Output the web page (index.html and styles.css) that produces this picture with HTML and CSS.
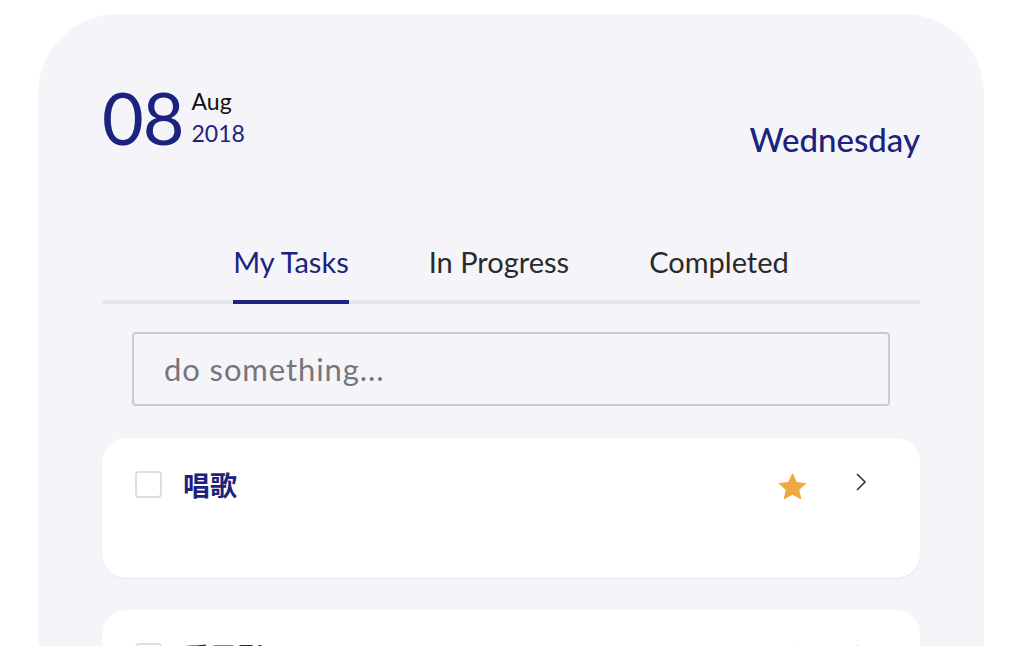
FILE: index.html
```html
<!DOCTYPE html>
<html lang="zh">
<head>
<meta charset="utf-8">
<title>Tasks</title>
<link rel="stylesheet" href="styles.css">
</head>
<body>
<div class="panel">
  <header class="header">
    <div class="date">
      <span class="day">08</span>
      <div class="month-year">
        <span class="month">Aug</span>
        <span class="year">2018</span>
      </div>
    </div>
    <div class="weekday">Wednesday</div>
  </header>

  <nav class="tabs">
    <div class="tab active">My Tasks</div>
    <div class="tab">In Progress</div>
    <div class="tab">Completed</div>
  </nav>

  <div class="input-wrap">
    <input class="task-input" type="text" placeholder="do something...">
  </div>

  <div class="card">
    <span class="checkbox"></span>
    <span class="task-name">唱歌</span>
    <svg class="star" width="31" height="30" viewBox="0 0 24 24"><path d="M12 1.8l3.1 6.6 7.2.8-5.4 4.9 1.5 7.1L12 17.6l-6.4 3.6 1.5-7.1L1.7 9.2l7.2-.8z" fill="#f0a843" stroke="#f0a843" stroke-width="1" stroke-linejoin="round"/></svg>
    <svg class="chevron" width="14" height="20" viewBox="0 0 14 20"><path d="M3 2l8 8-8 8" fill="none" stroke="#333" stroke-width="1.6"/></svg>
  </div>

  <div class="card">
    <span class="checkbox"></span>
    <span class="task-name">看電影</span>
    <svg class="star" width="31" height="30" viewBox="0 0 24 24"><path d="M12 1.8l3.1 6.6 7.2.8-5.4 4.9 1.5 7.1L12 17.6l-6.4 3.6 1.5-7.1L1.7 9.2l7.2-.8z" fill="#f0a843" stroke="#f0a843" stroke-width="1" stroke-linejoin="round"/></svg>
    <svg class="chevron" width="14" height="20" viewBox="0 0 14 20"><path d="M3 2l8 8-8 8" fill="none" stroke="#333" stroke-width="1.6"/></svg>
  </div>
</div>
</body>
</html>
```

FILE: styles.css
```css
* { box-sizing: border-box; }
html, body { margin: 0; padding: 0; background: #ffffff; overflow: hidden; }
body {
  font-family: "Lato", "Noto Sans CJK SC", sans-serif;
  height: 646px;
}
.panel {
  margin: 14px 34px 0 38px;
  width: 946px;
  height: 800px;
  background: #f5f5f9;
  border-radius: 80px 80px 0 0;
  padding: 0 64px;
}
.header {
  display: flex;
  justify-content: space-between;
  align-items: flex-start;
  padding-top: 67px;
}
.date { display: flex; align-items: flex-start; }
.day {
  font-size: 72px;
  font-weight: 400;
  line-height: 72px;
  color: #1b237e;
  letter-spacing: -1px;
}
.month-year {
  display: flex;
  flex-direction: column;
  margin-left: 8px;
  margin-top: 4px;
}
.month { font-size: 23px; line-height: 32px; color: #111; }
.year { font-size: 23px; line-height: 32px; color: #1b237e; }
.weekday {
  font-size: 33px;
  color: #1b237e;
  margin-top: 38px;
  font-weight: 500;
}
.tabs {
  display: flex;
  justify-content: center;
  gap: 80px;
  margin-top: 86px;
  border-bottom: 4px solid #e5e7ec;
}
.tab {
  font-size: 29px;
  color: #2a2a2a;
  padding-bottom: 21px;
  margin-bottom: -4px;
  border-bottom: 4px solid transparent;
  line-height: 34px;
}
.tab.active { color: #1b237e; border-bottom-color: #1b237e; }
.input-wrap { padding: 28px 30px 0; }
.task-input {
  width: 100%;
  height: 74px;
  border: 2px solid #cbcbcf;
  border-radius: 4px;
  background: #f5f5f9;
  font-family: inherit;
  font-size: 31px;
  letter-spacing: 0.9px;
  padding: 0 30px;
  outline: none;
}
.task-input::placeholder { color: #76767a; }
.card {
  margin-top: 32px;
  height: 140px;
  background: #ffffff;
  border-radius: 24px;
  box-shadow: 0 1px 1px #e3e6ec;
  display: flex;
  align-items: flex-start;
  padding: 33px 52px 0 33px;
}
.checkbox {
  width: 27px;
  height: 27px;
  border: 2px solid #dcdee3;
  border-radius: 4px;
  flex: none;
}
.task-name {
  margin-left: 21px;
  font-family: "Noto Sans CJK SC", sans-serif;
  font-size: 27px;
  font-weight: 700;
  color: #1b237e;
  line-height: 27px;
  flex: 1;
}
.star { margin-top: 1px; flex: none; }
.chevron { margin-left: 46px; margin-top: 1px; flex: none; }
```
